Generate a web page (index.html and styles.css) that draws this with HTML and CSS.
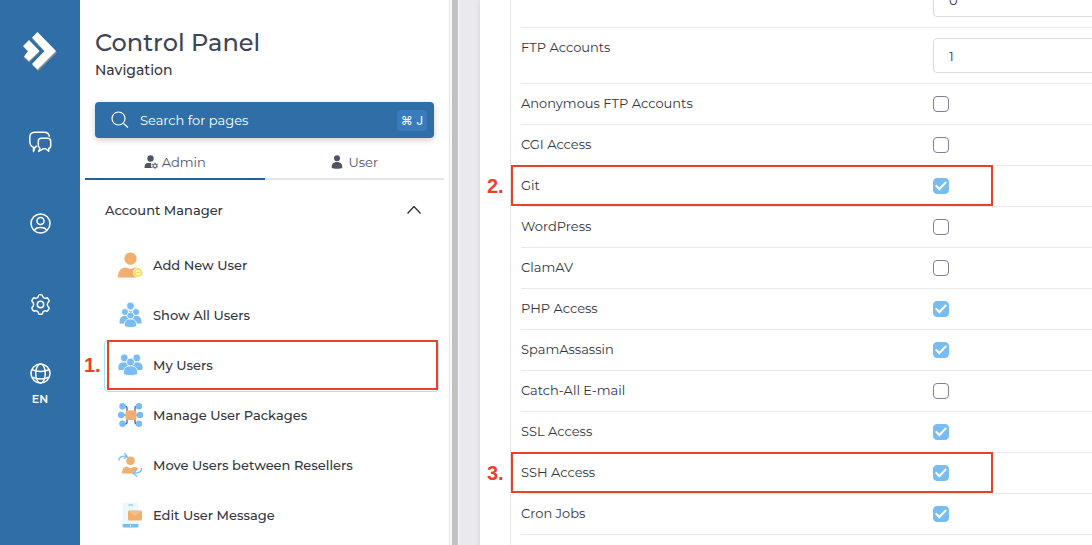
FILE: index.html
```html
<!DOCTYPE html>
<html lang="en">
<head>
<meta charset="utf-8">
<meta name="viewport" content="width=device-width, initial-scale=1">
<title>Control Panel</title>
<link rel="stylesheet" href="styles.css">
</head>
<body>
<div class="app">
  <nav class="rail" aria-label="Main">
    <a class="logo" href="#" aria-label="Home">
      <svg width="36" height="40" viewBox="0 0 36 40"><g fill="#8b8f93"><path d="M15.500 2.500 35 21.500 16 40 10.500 34.500 23.500 21.500 10 8z"/><path d="M7 10.500 17.500 21.500 7 31.500 1.500 26.500 6.500 21.500 1.500 16z"/></g><g fill="#fff"><path d="M15.500 1 34 20 15.500 38.500 10 33 22.500 20 10 6.500z"/><path d="M7 9 17.500 20 7 30 2 25.500 6 20 1 15z"/></g></svg>
    </a>
    <a class="rail-link" href="#" aria-label="Messages">
      <svg width="24" height="24" viewBox="0 0 24 24"><path d="M7 17.300 5.500 21.500V17.200C3 16.500 2 14.600 1.800 12V7.200C1.800 4 3.600 2.300 6.800 2.200H16c3.500 0 5.200 1.700 5.400 4.600M7 17.300 9 16M12.500 8.200h7c2.200 0 3.200 1.200 3.200 3v4.300c0 1.800-.8 2.700-2 3v2.800l-3-2.600h-2.200l-4.800 2.700 1.300-3.300c-1.200-.5-1.700-1.400-1.700-2.900v-4c0-1.900 1.200-3 3.200-3z"/></svg>
    </a>
    <a class="rail-link" href="#" aria-label="Profile">
      <svg width="24" height="24" viewBox="0 0 24 24"><circle cx="12.500" cy="12.500" r="9.500"/><circle cx="12.500" cy="10" r="3.500"/><path d="M6.300 19.500c.8-2 3-3 6.200-3s5.400 1 6.200 3"/></svg>
    </a>
    <a class="rail-link" href="#" aria-label="Settings">
      <svg width="24" height="24" viewBox="-.5 -.5 24 24"><circle cx="12" cy="12" r="3.200"/><path d="M10 3.200a1.300 1.300 0 0 1 1.300-1h1.400a1.300 1.300 0 0 1 1.300 1c.4 2.200 1.800 3 3.900 2.300a1.300 1.300 0 0 1 1.600.6l.9 1.500a1.300 1.300 0 0 1-.3 1.700c-1.700 1.500-1.700 3.900 0 5.400a1.300 1.300 0 0 1 .3 1.700l-.9 1.500a1.300 1.300 0 0 1-1.600.6c-2.100-.7-3.500.1-3.900 2.300a1.300 1.300 0 0 1-1.300 1h-1.400a1.300 1.300 0 0 1-1.300-1c-.4-2.200-1.800-3-3.900-2.300a1.300 1.300 0 0 1-1.600-.6l-.9-1.500a1.300 1.300 0 0 1 .3-1.700c1.700-1.500 1.700-3.900 0-5.400a1.300 1.300 0 0 1-.3-1.700l.9-1.500a1.300 1.300 0 0 1 1.600-.6c2.100.7 3.500-.1 3.900-2.300z"/></svg>
    </a>
    <a class="rail-link language" href="#">
      <svg width="24" height="24" viewBox="0 0 24 24" aria-hidden="true"><circle cx="12.500" cy="12.500" r="9.500"/><ellipse cx="12.500" cy="12.500" rx="4.800" ry="9.500"/><path d="M4 8.700c5 2 12 2 17 0M4 16.300c5 2 12 2 17 0"/></svg>
      <span>EN</span>
    </a>
  </nav>

  <aside class="sidebar">
    <header class="heading">
      <h1>Control Panel</h1>
      <p>Navigation</p>
    </header>
    <button class="search" type="button">
      <svg width="18" height="18" viewBox="0 0 18 18" aria-hidden="true"><circle cx="7.500" cy="7.500" r="6.500"/><path d="m12.500 12.500 4.500 4"/></svg>
      <span>Search for pages</span>
      <kbd>⌘ J</kbd>
    </button>
    <div class="tabs" role="tablist">
      <button class="tab active" type="button" role="tab" aria-selected="true">
        <svg width="14" height="14" viewBox="0 0 14 14" aria-hidden="true"><circle cx="6.500" cy="3.500" r="3.200"/><path d="M.5 13c0-3 1-5 3.500-5h3l.4 1.500-.4 2 1.200 1.500z"/><path class="cog" d="M11 7.800v6M8.300 9.300l5.300 3M8.300 12.300 13.600 9.300"/><circle class="cog-ring" cx="11" cy="10.800" r="1.800"/></svg>
        Admin
      </button>
      <button class="tab" type="button" role="tab" aria-selected="false">
        <svg width="14" height="14" viewBox="0 0 14 14" aria-hidden="true"><circle cx="7" cy="3.200" r="3"/><path d="M1.800 13c-.6-4 1.700-6 5.200-6s5.800 2 5.200 6c-1.500 1-8.900 1-10.400 0z"/></svg>
        User
      </button>
    </div>
    <button class="section" type="button" aria-expanded="true">
      Account Manager
      <svg width="14" height="8" viewBox="0 0 14 8" aria-hidden="true"><path d="m.5 7.500 6.500-7 6.500 7"/></svg>
    </button>
    <ul class="menu">
      <li><a href="#">
        <svg width="26" height="26" viewBox="0 0 26 26" aria-hidden="true"><g fill="#f0ae70"><circle cx="12.500" cy="6.700" r="6.200"/><path d="M0 25.500c0-6 2.500-9.500 7-10h1l4.500 1.500 4.500-1.500h2v10z"/></g><circle cx="20" cy="20.500" r="5" fill="#fff"/><circle cx="20" cy="20.500" r="3.400" fill="#fff" stroke="#ffda43" stroke-width="1.800"/><path d="M20 18.800v3.400M18.300 20.500h3.400" stroke="#ffda43"/></svg>
        Add New User</a></li>
      <li><a href="#">
        <svg class="people" width="26" height="26" viewBox="0 0 26 26" aria-hidden="true"><circle cx="12.500" cy="4" r="3.900"/><path d="M7.500 15c0-4 2-6.500 5-6.500s5 2.500 5 6.500z"/><circle cx="7" cy="10" r="3.500"/><circle cx="18" cy="10" r="3.500"/><path d="M1.200 21c-.3-4 1.500-7.500 5.500-7.500s5.800 3.500 5.300 8.500H2zM13 22c-.5-5 1-8.500 5.300-8.500s5.800 3.500 5.500 7.500l-.5 1z"/><circle cx="12.500" cy="13.500" r="3.500"/><path d="M6.500 24c-.3-4.500 1.500-7 6-7s6.300 2.500 6 7c-1.500 2-10.500 2-12 0z"/></svg>
        Show All Users</a></li>
      <li class="current"><a href="#" aria-current="page">
        <svg class="people" width="26" height="26" viewBox="0 0 26 26" aria-hidden="true"><circle cx="6.300" cy="6" r="3.900"/><circle cx="18.700" cy="6" r="3.900"/><path d="M0 17c-.3-4.500 1.500-7 6-7s7 3 6 8.500H1zM13 18.500c-1-5.500 1.500-8.500 6-8.500s6.300 2.500 6 7l-1 1.500z"/><circle cx="12.500" cy="10" r="4"/><path d="M5.500 22c-.5-5 1.500-8 7-8s7.500 3 7 8c-2 2-12 2-14 0z"/></svg>
        My Users</a><span class="callout">1.</span></li>
      <li><a href="#">
        <svg width="26" height="26" viewBox="0 0 26 26" aria-hidden="true"><path d="M4 4h3q2 0 2 2v4M22 4h-3q-2 0-2 2v4M4 22h3q2 0 2-2v-4M22 22h-3q-2 0-2-2v-4M3 13h20" fill="none" stroke="#4d4c95" stroke-width="1.200"/><rect x="7.500" y="8.500" width="11" height="9.500" rx="2" fill="#f0ae70"/><g fill="#78bcf2"><circle cx="4.500" cy="4.300" r="3.200"/><circle cx="21" cy="4.300" r="3.200"/><circle cx="3.200" cy="13" r="3.200"/><circle cx="22" cy="13" r="3.200"/><circle cx="4.500" cy="21.700" r="3.200"/><circle cx="21" cy="21.700" r="3.200"/></g></svg>
        Manage User Packages</a></li>
      <li><a href="#">
        <svg width="26" height="26" viewBox="0 0 26 26" aria-hidden="true"><g fill="#f0ae70"><circle cx="12.500" cy="8.800" r="4.300"/><path d="M4 21.500c0-4.500 1.500-6.500 5-6.800l3.500 1.500 3.700-1.500c2 .2 3.500 1 4.300 2.300l-5 2.500v2z"/></g><path d="M.7 8.500C1.500 4.500 4 3.500 9 4.500M6.500 1.200 9.500 5 5.500 6.500M23.500 16c.2 3.500-2 5.200-8 5.200M18.500 17.700l-3.300 3.800 4 3" fill="none" stroke="#78bcf2" stroke-width="1.300"/></svg>
        Move Users between Resellers</a></li>
      <li><a href="#">
        <svg width="26" height="26" viewBox="0 0 26 26" aria-hidden="true"><rect x="4.500" y=".5" width="16" height="25" rx="1.500" fill="#ecf9fb"/><path d="M4.500 22h16v2q0 1.500-2 1.500h-12q-2 0-2-1.500z" fill="#78bcf2"/><path d="M10.500 3h4.500" stroke="#78bcf2"/><circle cx="12.500" cy="23.800" r=".8" fill="#fff"/><rect x="10" y="8.500" width="14" height="10" rx="1" fill="#f0ae70"/><path d="m10.500 9 6.500 5 6.500-5z" fill="#f6bd85"/></svg>
        Edit User Message</a></li>
    </ul>
  </aside>
  <div class="scrollbar"></div>

  <main class="content">
    <form class="card">
      <div class="options">
        <div class="row"><input class="field" type="text" value="0" aria-label="Limit"></div>
        <div class="row"><label for="ftp">FTP Accounts</label><input class="field" id="ftp" type="text" value="1"></div>
        <div class="row"><label for="anon">Anonymous FTP Accounts</label><input class="check" id="anon" type="checkbox"></div>
        <div class="row"><label for="cgi">CGI Access</label><input class="check" id="cgi" type="checkbox"></div>
        <div class="row marked"><label for="git">Git</label><input class="check" id="git" type="checkbox" checked><span class="callout">2.</span></div>
        <div class="row"><label for="wp">WordPress</label><input class="check" id="wp" type="checkbox"></div>
        <div class="row"><label for="clam">ClamAV</label><input class="check" id="clam" type="checkbox"></div>
        <div class="row"><label for="php">PHP Access</label><input class="check" id="php" type="checkbox" checked></div>
        <div class="row"><label for="spam">SpamAssassin</label><input class="check" id="spam" type="checkbox" checked></div>
        <div class="row"><label for="catch">Catch-All E-mail</label><input class="check" id="catch" type="checkbox"></div>
        <div class="row"><label for="ssl">SSL Access</label><input class="check" id="ssl" type="checkbox" checked></div>
        <div class="row marked"><label for="ssh">SSH Access</label><input class="check" id="ssh" type="checkbox" checked><span class="callout">3.</span></div>
        <div class="row"><label for="cron">Cron Jobs</label><input class="check" id="cron" type="checkbox" checked></div>
      </div>
    </form>
  </main>
</div>
</body>
</html>
```
FILE: styles.css
```css
*, *::before, *::after { box-sizing: border-box; }
body {
  margin: 0;
  font-family: Montserrat, Inter, "Noto Sans", sans-serif;
  font-size: 13px;
  font-weight: 500;
  line-height: 20px;
  color: #33363d;
  background: #eae9ee;
}
button, input { font: inherit; color: inherit; }
button { border: 0; background: none; padding: 0; }
a { color: inherit; text-decoration: none; }
h1, p, ul { margin: 0; padding: 0; }
svg { flex: none; }

.app { display: flex; height: 100vh; overflow: hidden; }

.rail {
  flex: none;
  width: 80px;
  display: flex;
  flex-direction: column;
  align-items: center;
  background: #306ea8;
  color: #fff;
}
.logo { display: block; height: 40px; margin: 31px 0 59px; }
.rail-link { display: block; height: 24px; margin-bottom: 57px; }
.rail-link svg { display: block; fill: none; stroke: #fff; stroke-width: 1.500; stroke-linejoin: round; }
.language { margin-top: -12px; height: auto; font-size: 11px; font-weight: 600; text-align: center; }
.language span { display: block; margin-top: 4px; }

.sidebar {
  flex: none;
  width: 370px;
  padding: 28px 5px 0;
  background: #fff;
  border-right: 1px solid #e3e3e6;
}
.heading { padding: 0 10px; }
.heading h1 { font-size: 24px; line-height: 30px; font-weight: 500; color: #3d4656; }
.heading p { margin-top: 2px; font-size: 14px; }

.search {
  display: flex;
  align-items: center;
  gap: 11px;
  width: calc(100% - 20px);
  height: 36px;
  margin: 22px 10px 0;
  padding: 0 7px 0 16px;
  border-radius: 4px;
  background: #306ea8;
  color: #fff;
  font-weight: 400;
  box-shadow: 0 2px 6px #0003;
}
.search svg { fill: none; stroke: #fff; stroke-width: 1.200; }
.search kbd {
  margin-left: auto;
  padding: 0 4px;
  border-radius: 4px;
  background: #397bbd;
  font: 12px/21px Inter, "DejaVu Sans", sans-serif;
}

.tabs { display: flex; margin-top: 5px; }
.tab {
  flex: 1;
  display: flex;
  justify-content: center;
  align-items: center;
  gap: 4px;
  height: 37px;
  padding-top: 2px;
  border-bottom: 2px solid #e5e4eb;
  font-weight: 400;
  color: #4e5665;
}
.tab.active { border-color: #285f94; }
.tab svg { fill: #4e5665; }
.tab .cog { stroke: #4e5665; stroke-width: 1.200; }
.tab .cog-ring { fill: #fff; stroke: #4e5665; stroke-width: 1; }

.section {
  display: flex;
  justify-content: space-between;
  align-items: center;
  width: 100%;
  height: 60px;
  padding: 0 23px 0 20px;
}
.section svg { fill: none; stroke: #33363d; stroke-width: 1.400; }

.menu { list-style: none; margin: 0 6px 0 20px; }
.menu li { position: relative; height: 50px; }
.menu a { display: flex; align-items: center; gap: 9px; height: 50px; padding-left: 13px; }
.people { fill: #78bcf2; stroke: #fff; stroke-width: 0.800; }
.current::before {
  content: "";
  position: absolute;
  inset: 0 -1px -2px;
  border: 1px solid #b5dcf3;
  border-radius: 4px;
}
.current::after, .marked::after {
  content: "";
  position: absolute;
  border: 2px solid #e94226;
  pointer-events: none;
}
.current::after { inset: 0 0 0 2px; }
.callout {
  position: absolute;
  font: bold 20px/24px "Liberation Sans", sans-serif;
  color: #e94226;
}
.current .callout { left: -21px; top: 13px; }

.scrollbar { flex: none; width: 9px; background: #c1c1c1; border: solid #fafafa; border-width: 0 1px 0 2px; }

.content { flex: 1; min-width: 0; padding-left: 21px; overflow: hidden; }
.card {
  display: flow-root;
  min-height: 100%;
  padding-left: 30px;
  background: #fff;
  box-shadow: 0 0 5px #0000001a;
}
.options { margin: -28px -20px 0 0; padding: 0 0 20px 10px; border-left: 1px solid #e3e3e6; }
.row {
  position: relative;
  display: grid;
  grid-template-columns: 412px 1fr;
  padding: 10px 0;
  border-bottom: 1px solid #e9e9eb;
}
.row label { height: 20px; line-height: 18px; font-weight: 400; }
.field {
  grid-column: 2;
  width: 100%;
  height: 35px;
  padding: 0 15px;
  border: 1px solid #dcdce0;
  border-radius: 4px;
  background: #fff;
  font-weight: 400;
}
.check {
  appearance: none;
  align-self: center;
  width: 16px;
  height: 16px;
  margin: 0;
  border: 1px solid #7b8296;
  border-radius: 4px;
  background: #fff;
}
.check:checked { border-color: #78bcf2; background: #78bcf2; }
.check:checked::before {
  content: "";
  display: block;
  width: 12px;
  height: 10px;
  margin: 2px 1px;
  background: #fff;
  clip-path: polygon(0 50%, 12% 38%, 36% 66%, 88% 2%, 100% 14%, 36% 98%);
}
.marked::after { left: -10px; top: -1px; bottom: 0; width: 482px; }
.marked .callout { left: -34px; top: 8px; }
```
